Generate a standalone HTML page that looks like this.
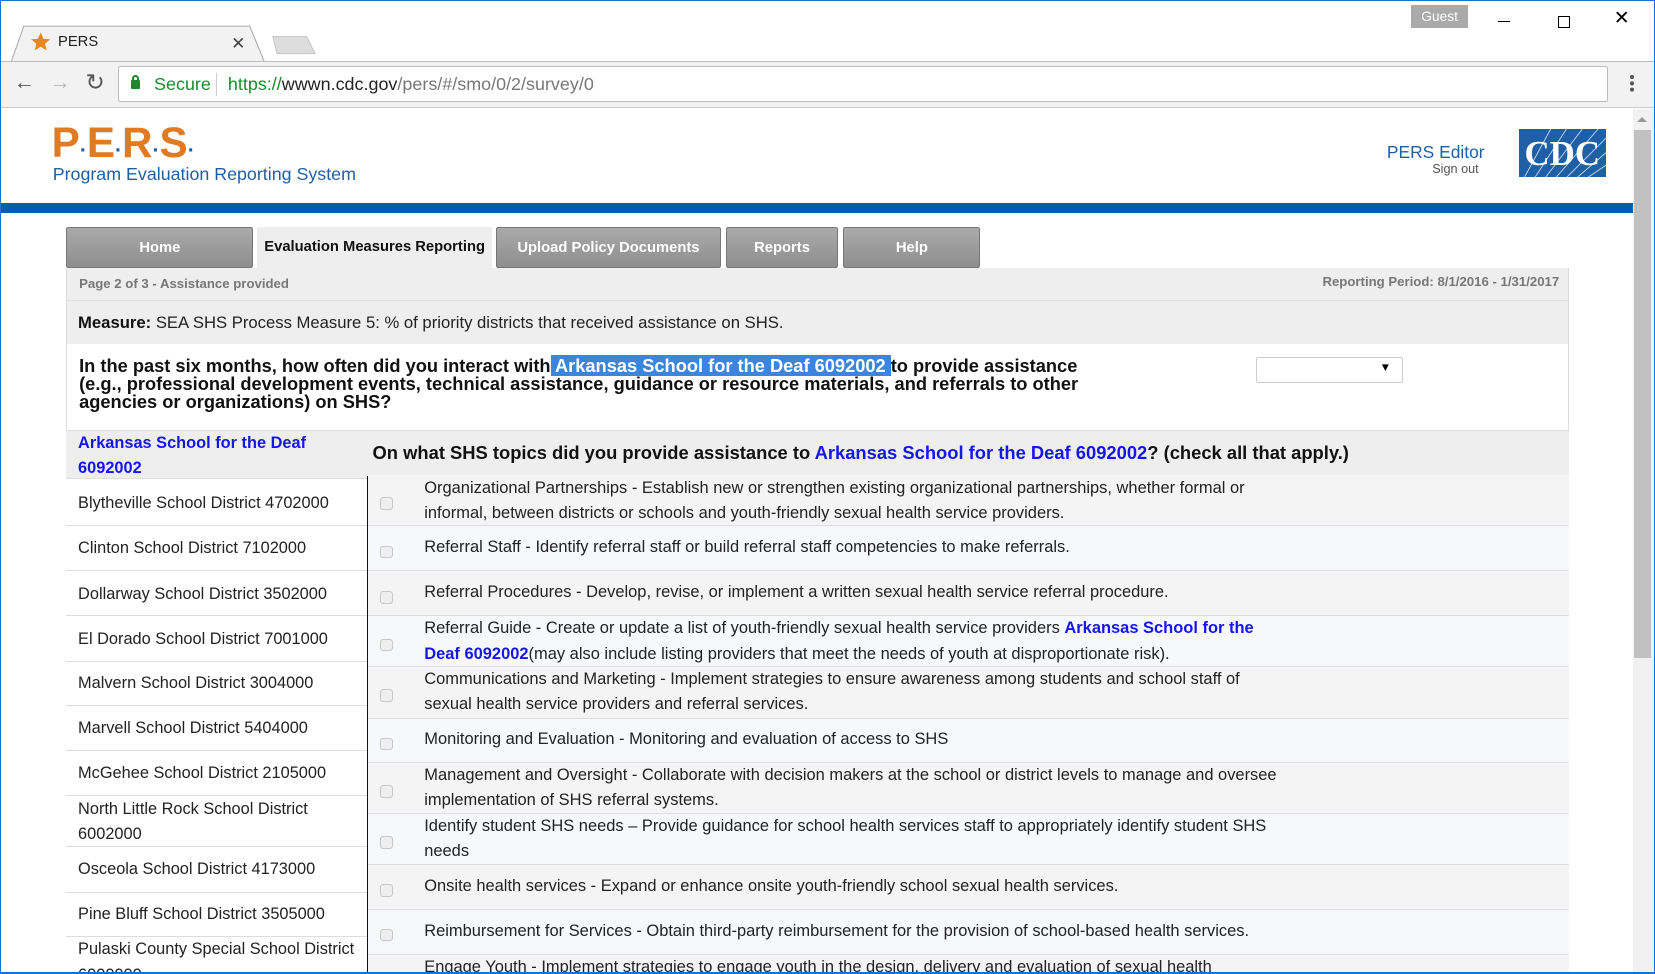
<!DOCTYPE html>
<html><head><meta charset="utf-8"><style>
*{margin:0;padding:0;box-sizing:border-box}
html,body{width:1655px;height:974px;overflow:hidden;background:#fff;font-family:"Liberation Sans",Arial,sans-serif}
#w{width:1568px;height:923px;zoom:1.05548;position:relative;overflow:hidden;border:1px solid #1a73c8;background:#fff}
.a{position:absolute}
.tabbar{left:0;top:0;width:1568px;height:57px;background:#fff}
.toolbar{left:0;top:57px;width:1568px;height:44px;background:#f2f2f2;border-top:1px solid #bbb;border-bottom:1px solid #ccc}
.row{position:absolute;left:348px;width:1138px;border-bottom:1px solid #ddd;font-size:15.6px;line-height:24px;color:#222}
.row .t{position:absolute;left:53px;width:880px}
.row .cb{position:absolute;left:11px;width:12px;height:12px;border:1px solid #c8c8c8;border-radius:3px;background:#eee}
.lr{position:absolute;left:62px;width:286px;border-bottom:1px solid #ddd;font-size:15.5px;line-height:24px;color:#222;padding-left:11px}
.blue{color:#1515ee;font-weight:bold}
.btn{position:absolute;top:214px;height:39px;background:linear-gradient(#aaa,#8e8e8e);border:1px solid #777;border-radius:2px;color:#fff;font-weight:bold;font-size:14px;text-align:center;line-height:38px}
</style></head><body><div id="w">
<div class="a tabbar"></div>
<svg class="a" style="left:8px;top:22px" width="290" height="36"><path d="M2 36 L14 2 L228 2 L242 36" fill="#f2f2f2" stroke="#aaa"/><path d="M250 12 L282 12 L290 28 L254 28 Z" fill="#ddd" stroke="#c8c8c8"/><path d="M30 8 l2.6 6 6.4 .5 -4.9 4.2 1.5 6.3 -5.6-3.4 -5.6 3.4 1.5-6.3 -4.9-4.2 6.4-.5z" fill="#e8871e"/></svg>
<div class="a" style="left:54px;top:31px;font-size:14px;color:#222">PERS</div>
<div class="a" style="left:218px;top:30px;font-size:16px;color:#444">✕</div>
<div class="a" style="left:1336px;top:4px;width:54px;height:22px;background:#aaa;color:#fff;font-size:13px;text-align:center;line-height:22px">Guest</div>
<div class="a" style="left:1418px;top:19px;width:12px;height:1px;background:#000"></div>
<div class="a" style="left:1475px;top:14px;width:12px;height:12px;border:1px solid #000"></div>
<div class="a" style="left:1528px;top:6px;font-size:18px;color:#000">✕</div>
<div class="a toolbar"></div>
<div class="a" style="left:12px;top:66px;font-size:20px;color:#555">←</div>
<div class="a" style="left:46px;top:66px;font-size:20px;color:#bbb">→</div>
<div class="a" style="left:80px;top:64px;font-size:22px;color:#555">↻</div>
<div class="a" style="left:111px;top:62px;width:1412px;height:34px;background:#fff;border:1px solid #bbb;border-radius:2px"></div>
<div class="a" style="left:123px;top:75px;width:9px;height:8px;background:#1a8a2e;border-radius:1px"></div>
<div class="a" style="left:124px;top:70px;width:7px;height:8px;border:2px solid #1a8a2e;border-radius:4px 4px 0 0"></div>
<div class="a" style="left:145px;top:69px;font-size:17px;color:#1a8a2e">Secure</div>
<div class="a" style="left:204px;top:68px;width:1px;height:22px;background:#ccc"></div>
<div class="a" style="left:215px;top:69px;font-size:17px;color:#777"><span style="color:#1a8a2e">https://</span><span style="color:#222">wwwn.cdc.gov</span>/pers/#/smo/0/2/survey/0</div>
<div class="a" style="left:1543px;top:70px;width:4px;height:4px;background:#555;border-radius:2px;box-shadow:0 6px 0 #555,0 12px 0 #555"></div>
<div class="a" style="left:1546px;top:102px;width:22px;height:821px;background:#f1f1f1"></div>
<div class="a" style="left:1547px;top:122px;width:16px;height:500px;background:#c1c1c1"></div>
<div class="a" style="left:1550px;top:110px;width:0;height:0;border-left:5px solid transparent;border-right:5px solid transparent;border-bottom:5px solid #999"></div>
<div class="a" style="left:48px;top:112px;font-size:40px;font-weight:bold;color:#e07b22;letter-spacing:0">P<span style="color:#1f5fa6;font-size:20px">·</span>E<span style="color:#1f5fa6;font-size:20px">·</span>R<span style="color:#1f5fa6;font-size:20px">·</span>S<span style="color:#1f5fa6;font-size:20px">·</span></div>
<div class="a" style="left:49px;top:154px;font-size:16.9px;color:#1f5fa6">Program Evaluation Reporting System</div>
<div class="a" style="left:1313px;top:134px;font-size:16.5px;color:#1f5fa6">PERS Editor</div>
<div class="a" style="left:1356px;top:153px;font-size:12px;color:#555">Sign out</div>
<svg class="a" style="left:1438px;top:121px" width="83" height="46"><rect width="83" height="46" fill="#1f5fa6"/><g stroke="#fff" stroke-width=".8" opacity=".8"><path d="M5 46 L30 0M15 46 L45 0M25 46 L60 0M35 46 L75 0M45 46 L83 8M55 46 L83 22M65 46 L83 34"/></g><text x="41" y="34" font-family="Liberation Serif,serif" font-weight="bold" font-size="33" fill="#fff" text-anchor="middle">CDC</text></svg>
<div class="a" style="left:0;top:191px;width:1546px;height:10px;background:#005eaa"></div>
<div class="a" style="left:62px;top:253px;width:1424px;height:670px;background:#eee;border-left:1px solid #ddd;border-right:1px solid #ddd"></div>
<div class="btn" style="left:62px;width:177px">Home</div>
<div class="a" style="left:243px;top:214px;width:222px;height:40px;background:#eee;font-size:14px;font-weight:bold;color:#111;text-align:center;line-height:38px">Evaluation Measures Reporting</div>
<div class="btn" style="left:469px;width:213px">Upload Policy Documents</div>
<div class="btn" style="left:687px;width:106px">Reports</div>
<div class="btn" style="left:798px;width:130px">Help</div>
<div class="a" style="left:74px;top:261px;font-size:12.5px;font-weight:bold;color:#777">Page 2 of 3 - Assistance provided</div>
<div class="a" style="left:1252px;top:259px;font-size:12.5px;font-weight:bold;color:#777">Reporting Period: 8/1/2016 - 1/31/2017</div>
<div class="a" style="left:62px;top:283px;width:1424px;height:1px;background:#ddd"></div>
<div class="a" style="left:73px;top:296px;font-size:15.8px;color:#222"><b style="color:#111">Measure:</b> SEA SHS Process Measure 5: % of priority districts that received assistance on SHS.</div>
<div class="a" style="left:63px;top:325px;width:1422px;height:82px;background:#fff;border-bottom:1px solid #ddd"></div>
<div class="a" style="left:74px;top:337px;font-size:17.3px;font-weight:bold;color:#111;line-height:17px">In the past six months, how often did you interact with<span style="background:#3b85e0;color:#fff"> Arkansas School for the Deaf 6092002 </span>to provide assistance<br>(e.g., professional development events, technical assistance, guidance or resource materials, and referrals to other<br>agencies or organizations) on SHS?</div>
<div class="a" style="left:1189px;top:337px;width:139px;height:25px;border:1px solid #ccc;border-radius:2px;background:#fff"><span style="position:absolute;right:10px;top:3px;font-size:11px">▼</span></div>
<div class="a" style="left:348px;top:407px;width:1138px;height:43px;background:#eee;border-bottom:1px solid #ddd"></div>
<div class="a" style="left:352px;top:418px;font-size:17.4px;font-weight:bold;color:#111">On what SHS topics did you provide assistance to <span style="color:#1515ee">Arkansas School for the Deaf 6092002</span>? (check all that apply.)</div>
<div class="lr" style="top:407px;height:46px;background:#eee;color:#1515ee;font-weight:bold;padding-top:0">Arkansas School for the Deaf<br>6092002</div>
<div class="lr" style="top:453px;height:44px;background:#fff;padding-top:11px">Blytheville School District 4702000</div>
<div class="lr" style="top:497px;height:43px;background:#fff;padding-top:10px">Clinton School District 7102000</div>
<div class="lr" style="top:540px;height:43px;background:#fff;padding-top:10px">Dollarway School District 3502000</div>
<div class="lr" style="top:583px;height:43px;background:#fff;padding-top:10px">El Dorado School District 7001000</div>
<div class="lr" style="top:626px;height:42px;background:#fff;padding-top:9px">Malvern School District 3004000</div>
<div class="lr" style="top:668px;height:43px;background:#fff;padding-top:9px">Marvell School District 5404000</div>
<div class="lr" style="top:711px;height:42px;background:#fff;padding-top:9px">McGehee School District 2105000</div>
<div class="lr" style="top:753px;height:49px;background:#fff;padding-top:1px">North Little Rock School District<br>6002000</div>
<div class="lr" style="top:802px;height:43px;background:#fff;padding-top:9px">Osceola School District 4173000</div>
<div class="lr" style="top:845px;height:42px;background:#fff;padding-top:9px">Pine Bluff School District 3505000</div>
<div class="lr" style="top:887px;height:48px;background:#fff;padding-top:0">Pulaski County Special School District<br>6000000</div>
<div class="a" style="left:347px;top:450px;width:1px;height:473px;background:#111"></div>
<div class="row" style="top:449px;height:48px;background:#f4f4f4"><div class="cb" style="top:21px"></div><div class="t" style="top:1px">Organizational Partnerships - Establish new or strengthen existing organizational partnerships, whether formal or<br>informal, between districts or schools and youth-friendly sexual health service providers.</div></div>
<div class="row" style="top:497px;height:43px;background:#f7f8fc"><div class="cb" style="top:19px"></div><div class="t" style="top:9px">Referral Staff - Identify referral staff or build referral staff competencies to make referrals.</div></div>
<div class="row" style="top:540px;height:43px;background:#f4f4f4"><div class="cb" style="top:19px"></div><div class="t" style="top:9px">Referral Procedures - Develop, revise, or implement a written sexual health service referral procedure.</div></div>
<div class="row" style="top:583px;height:48px;background:#f7f8fc"><div class="cb" style="top:21px"></div><div class="t" style="top:0">Referral Guide - Create or update a list of youth-friendly sexual health service providers <span class="blue">Arkansas School for the<br>Deaf 6092002</span>(may also include listing providers that meet the needs of youth at disproportionate risk).</div></div>
<div class="row" style="top:631px;height:49px;background:#f4f4f4"><div class="cb" style="top:21px"></div><div class="t" style="top:0">Communications and Marketing - Implement strategies to ensure awareness among students and school staff of<br>sexual health service providers and referral services.</div></div>
<div class="row" style="top:680px;height:42px;background:#f7f8fc"><div class="cb" style="top:18px"></div><div class="t" style="top:8px">Monitoring and Evaluation - Monitoring and evaluation of access to SHS</div></div>
<div class="row" style="top:722px;height:48px;background:#f4f4f4"><div class="cb" style="top:21px"></div><div class="t" style="top:0">Management and Oversight - Collaborate with decision makers at the school or district levels to manage and oversee<br>implementation of SHS referral systems.</div></div>
<div class="row" style="top:770px;height:49px;background:#f7f8fc"><div class="cb" style="top:21px"></div><div class="t" style="top:0">Identify student SHS needs – Provide guidance for school health services staff to appropriately identify student SHS<br>needs</div></div>
<div class="row" style="top:819px;height:42px;background:#f4f4f4"><div class="cb" style="top:18px"></div><div class="t" style="top:8px">Onsite health services - Expand or enhance onsite youth-friendly school sexual health services.</div></div>
<div class="row" style="top:861px;height:43px;background:#f7f8fc"><div class="cb" style="top:18px"></div><div class="t" style="top:9px">Reimbursement for Services - Obtain third-party reimbursement for the provision of school-based health services.</div></div>
<div class="row" style="top:904px;height:40px;background:#f4f4f4"><div class="t" style="top:0">Engage Youth - Implement strategies to engage youth in the design, delivery and evaluation of sexual health</div></div>
<div class="a" style="left:0;top:920px;width:1568px;height:3px;background:#1a73c8"></div>
</div></body></html>
